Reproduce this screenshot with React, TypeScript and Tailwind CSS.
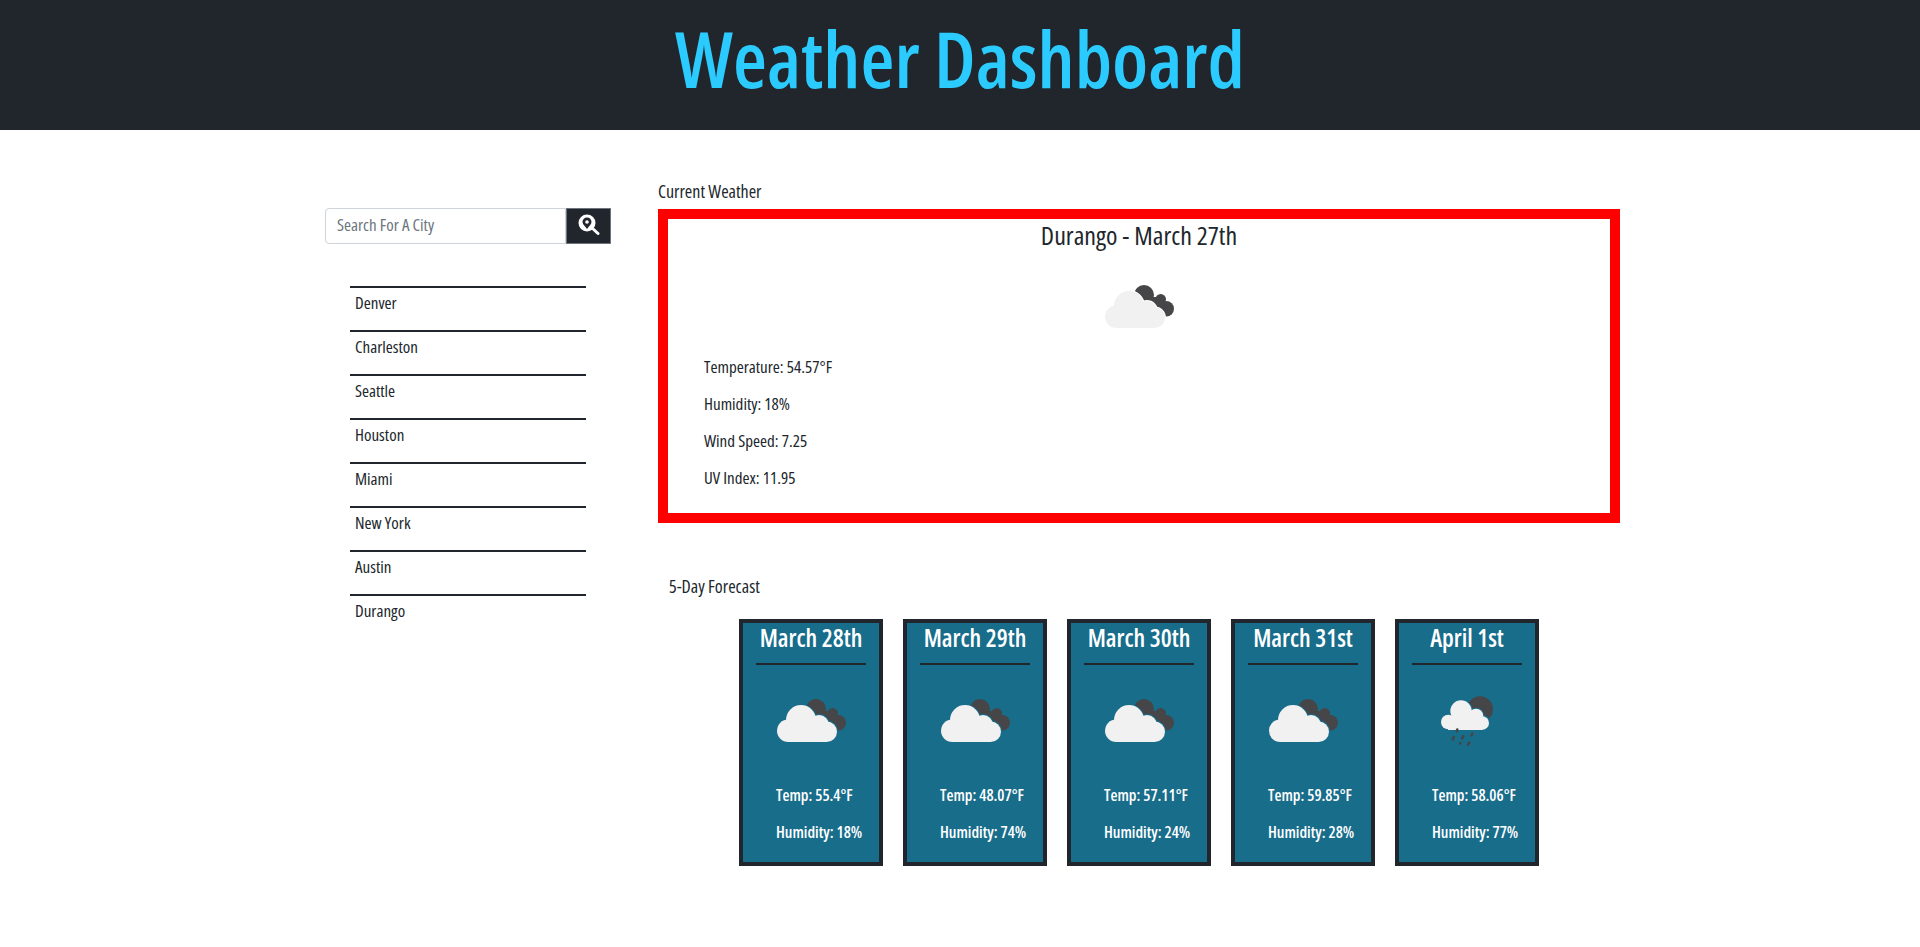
const cities = ["Denver", "Charleston", "Seattle", "Houston", "Miami", "New York", "Austin", "Durango"];

const forecast = [
  { date: "March 28th", temp: "55.4", humidity: "18", rain: false },
  { date: "March 29th", temp: "48.07", humidity: "74", rain: false },
  { date: "March 30th", temp: "57.11", humidity: "24", rain: false },
  { date: "March 31st", temp: "59.85", humidity: "28", rain: false },
  { date: "April 1st", temp: "58.06", humidity: "77", rain: true },
];

// the light cloud gets a ring in the backdrop colour so it stands off the dark one
function CloudIcon({ ring }: { ring: string }) {
  return (
    <svg width="70" height="43" viewBox="0 0 70 43" className="block">
      <g fill="#464648">
        <circle cx="39" cy="10" r="10" />
        <circle cx="55.700" cy="14.300" r="5.300" />
        <circle cx="61.300" cy="23.700" r="7.700" />
        <rect x="40" y="12" width="17" height="20" />
      </g>
      <g fill={ring} stroke={ring} strokeWidth="2">
        <circle cx="24" cy="21" r="15" />
        <circle cx="42" cy="26" r="10" />
        <circle cx="49.700" cy="32.700" r="10.300" />
      </g>
      <g fill="#f1f1f1">
        <circle cx="11.300" cy="31.700" r="11.300" />
        <circle cx="24" cy="21" r="15" />
        <circle cx="42" cy="26" r="10" />
        <circle cx="49.700" cy="32.700" r="10.300" />
        <rect x="11" y="28" width="39" height="15" />
      </g>
    </svg>
  );
}

function RainIcon() {
  return (
    <svg width="52" height="50" viewBox="0 0 52 50" className="block">
      <circle cx="39" cy="13.300" r="13" fill="#464648" />
      <g fill="#186d8b" stroke="#186d8b" strokeWidth="2">
        <circle cx="20" cy="15" r="10.700" />
        <circle cx="35" cy="20" r="7.300" />
        <circle cx="41.700" cy="26.700" r="6.700" />
      </g>
      <g fill="#f1f1f1">
        <circle cx="7.300" cy="26" r="7.300" />
        <circle cx="20" cy="15" r="10.700" />
        <circle cx="35" cy="20" r="7.300" />
        <circle cx="41.300" cy="27" r="6.700" />
        <rect x="7" y="22" width="34.500" height="12" />
      </g>
      <g stroke="#464648" strokeWidth="2.500" strokeLinecap="round">
        <line x1="16.300" y1="33.500" x2="15.800" y2="35" />
        <line x1="12.800" y1="41" x2="11.800" y2="43.500" />
        <line x1="22.200" y1="40" x2="21.200" y2="42.500" />
        <line x1="31.500" y1="37.500" x2="30.500" y2="39.500" />
        <line x1="19.300" y1="47" x2="19.100" y2="47.500" />
        <line x1="28.200" y1="46.500" x2="27.200" y2="48.800" />
      </g>
    </svg>
  );
}

function ForecastCard({ date, temp, humidity, rain }: (typeof forecast)[number]) {
  return (
    <div className="w-[144px] h-[247px] border-4 border-[#20262b] bg-[#186d8b] text-white flex flex-col">
      <h3 className="text-center text-[24.5px] leading-[30px] h-[40px] font-semibold">{date}</h3>
      <div className="mx-[13px] h-[2px] bg-[#20262b]"></div>
      {rain ? (
        <div className="h-[85px] mt-[31px] pl-[42px]">
          <RainIcon />
        </div>
      ) : (
        <div className="h-[82px] mt-[34px] pl-[34px]">
          <CloudIcon ring="#186d8b" />
        </div>
      )}
      <p className="pl-[33px] text-[16px] leading-[24px] font-semibold mt-[2px] whitespace-nowrap">Temp: {temp}°F</p>
      <p className="pl-[33px] text-[16px] leading-[24px] font-semibold mt-[13px] whitespace-nowrap">Humidity: {humidity}%</p>
    </div>
  );
}

export default function App() {
  return (
    <div className="min-h-[947px] bg-white text-[#20262b] font-['Open_Sans',sans-serif] [font-stretch:condensed]">
      <header className="h-[130px] bg-[#20262b] flex items-center justify-center pb-[14px]">
        <h1 className="text-[#2bcbff] text-[78px] leading-none font-semibold">Weather Dashboard</h1>
      </header>

      <main className="w-[1320px] mx-auto flex pt-[52px]">
        <aside className="w-[358px] pl-[25px] pt-[26px]">
          <div className="flex w-[286px] h-[36px]">
            <input
              placeholder="Search For A City"
              className="flex-1 min-w-0 border border-[#ced4da] rounded-l-[4px] pl-[11px] pb-[2px] text-[17px] font-medium placeholder:text-[#6c757d] outline-none"
            />
            <button className="w-[45px] bg-[#20262b] border border-[#6c757d] flex items-center justify-center pb-[3px]">
              <svg width="22" height="22" viewBox="0 0 22 22">
                <line x1="13.500" y1="13.500" x2="20" y2="19.500" stroke="white" strokeWidth="3" strokeLinecap="round" />
                <circle cx="9" cy="9" r="8.500" fill="white" />
                <path d="M9 15 C7 12 4.500 10.500 4.500 8 A4.500 4.500 0 0 1 13.500 8 C13.500 10.500 11 12 9 15 Z" fill="#20262b" />
                <circle cx="9" cy="8" r="1.800" fill="white" />
              </svg>
            </button>
          </div>
          <ul className="mt-[42px] ml-[25px] w-[236px]">
            {cities.map((city) => (
              <li key={city} className="h-[44px] border-t-2 border-[#20262b] pl-[5px] pt-[4px] text-[17px] leading-[22px] font-medium">
                {city}
              </li>
            ))}
          </ul>
        </aside>

        <section className="flex-1">
          <p className="text-[18px] leading-[24px] mb-[6px] mt-[-3px] font-medium">Current Weather</p>
          <div className="h-[314px] w-[962px] border-[10px] border-[#ff0000]">
            <h2 className="text-center text-[26px] leading-[32px] font-medium">Durango - March 27th</h2>
            <div className="flex justify-center mt-[34px] pl-[2px]">
              <CloudIcon ring="#ffffff" />
            </div>
            <div className="pl-[36px] mt-[28px] text-[17px] leading-[22px] font-medium flex flex-col gap-[15px]">
              <p>Temperature: 54.57°F</p>
              <p>Humidity: 18%</p>
              <p>Wind Speed: 7.25</p>
              <p>UV Index: 11.95</p>
            </div>
          </div>
          <p className="text-[18px] leading-[24px] pl-[11px] mt-[51px] font-medium">5-Day Forecast</p>
          <div className="flex gap-[20px] ml-[81px] mt-[21px]">
            {forecast.map((day) => (
              <ForecastCard key={day.date} {...day} />
            ))}
          </div>
        </section>
      </main>
    </div>
  );
}
